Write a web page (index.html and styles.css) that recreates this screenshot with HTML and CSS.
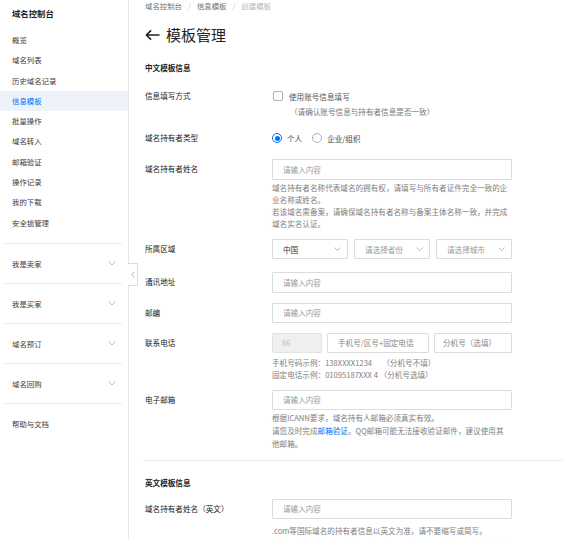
FILE: index.html
```html
<!DOCTYPE html>
<html lang="zh-CN">
<head>
<meta charset="utf-8">
<title>模板管理</title>
<link rel="stylesheet" href="styles.css">
</head>
<body>
<div class="app">
  <aside class="sidebar">
    <div class="sb-title">域名控制台</div>
    <ul class="sb-list">
      <li>概览</li>
      <li>域名列表</li>
      <li>历史域名记录</li>
      <li class="active">信息模板</li>
      <li>批量操作</li>
      <li>域名转入</li>
      <li>邮箱验证</li>
      <li>操作记录</li>
      <li>我的下载</li>
      <li>安全锁管理</li>
    </ul>
    <div class="sb-groups">
      <div class="sb-group"><span>我是卖家</span><svg class="chev" viewBox="0 0 8 5"><path d="M0.5 0.5L4 4L7.5 0.5"/></svg></div>
      <div class="sb-group"><span>我是买家</span><svg class="chev" viewBox="0 0 8 5"><path d="M0.5 0.5L4 4L7.5 0.5"/></svg></div>
      <div class="sb-group"><span>域名预订</span><svg class="chev" viewBox="0 0 8 5"><path d="M0.5 0.5L4 4L7.5 0.5"/></svg></div>
      <div class="sb-group"><span>域名回购</span><svg class="chev" viewBox="0 0 8 5"><path d="M0.5 0.5L4 4L7.5 0.5"/></svg></div>
      <div class="sb-group"><span>帮助与文档</span></div>
    </div>
    <div class="sb-toggle"><svg viewBox="0 0 5 8"><path d="M4 0.5L1 4L4 7.5"/></svg></div>
  </aside>
  <main class="main">
    <div class="breadcrumb"><span>域名控制台</span><i>/</i><span>信息模板</span><i>/</i><span class="cur">创建模板</span></div>
    <h1 class="title"><svg class="back" viewBox="0 0 16 12"><path d="M15.5 6H1.5M6.5 1L1.5 6L6.5 11"/></svg>模板管理</h1>

    <h2 class="sec-title">中文模板信息</h2>
    <div class="form">
      <div class="row r1">
        <div class="label">信息填写方式</div>
        <div class="ctrl">
          <div class="check"><span class="box"></span><span>使用账号信息填写</span></div>
          <div class="check-note">（请确认账号信息与持有者信息是否一致）</div>
        </div>
      </div>
      <div class="row r2">
        <div class="label">域名持有者类型</div>
        <div class="ctrl radios">
          <span class="radio on"></span><span class="rtext">个人</span>
          <span class="radio"></span><span class="rtext">企业/组织</span>
        </div>
      </div>
      <div class="row r3">
        <div class="label">域名持有者姓名</div>
        <div class="ctrl">
          <div class="input">请输入内容</div>
          <p class="help h-name">域名持有者名称代表域名的拥有权，请填写与所有者证件完全一致的企业名称或姓名。<br>若该域名需备案，请确保域名持有者名称与备案主体名称一致，并完成域名实名认证。</p>
        </div>
      </div>
      <div class="row r4">
        <div class="label">所属区域</div>
        <div class="ctrl selects">
          <div class="select val">中国<svg class="schev" viewBox="0 0 8 5"><path d="M0.5 0.5L4 4L7.5 0.5"/></svg></div>
          <div class="select">请选择省份<svg class="schev" viewBox="0 0 8 5"><path d="M0.5 0.5L4 4L7.5 0.5"/></svg></div>
          <div class="select">请选择城市<svg class="schev" viewBox="0 0 8 5"><path d="M0.5 0.5L4 4L7.5 0.5"/></svg></div>
        </div>
      </div>
      <div class="row r5">
        <div class="label">通讯地址</div>
        <div class="ctrl"><div class="input">请输入内容</div></div>
      </div>
      <div class="row r6">
        <div class="label">邮编</div>
        <div class="ctrl"><div class="input">请输入内容</div></div>
      </div>
      <div class="row r7">
        <div class="label">联系电话</div>
        <div class="ctrl">
          <div class="phones">
            <div class="input code">86</div>
            <div class="input num">手机号/区号+固定电话</div>
            <div class="input ext">分机号（选填）</div>
          </div>
          <p class="help h-phone">手机号码示例：138XXXX1234&nbsp;&nbsp;&nbsp;&nbsp;&nbsp;&nbsp;（分机号不填）<br>固定电话示例：01095187XXX 4 （分机号选填）</p>
        </div>
      </div>
      <div class="row r8">
        <div class="label">电子邮箱</div>
        <div class="ctrl">
          <div class="input">请输入内容</div>
          <p class="help h-mail">根据ICANN要求，域名持有人邮箱必须真实有效。<br>请您及时完成<a class="link">邮箱验证</a>。QQ邮箱可能无法接收验证邮件，建议使用其他邮箱。</p>
        </div>
      </div>
    </div>

    <div class="divider"></div>

    <h2 class="sec-title en">英文模板信息</h2>
    <div class="form">
      <div class="row">
        <div class="label">域名持有者姓名（英文）</div>
        <div class="ctrl">
          <div class="input">请输入内容</div>
          <p class="help h-en">.com等国际域名的持有者信息以英文为准，请不要缩写或简写。<br>中文信息将自动翻译为英文信息，如翻译有误，请您手动修改英文信息后再提交。</p>
        </div>
      </div>
    </div>
  </main>
</div>
</body>
</html>
```

FILE: styles.css
```css
* { box-sizing: border-box; }
html, body { margin: 0; padding: 0; background: #fff; }
body {
  font-family: "Noto Sans CJK SC", "Noto Sans", sans-serif;
  font-size: 7.6px;
  color: #333;
  overflow: hidden;
}
.app { display: flex; min-height: 539px; }

/* sidebar */
.sidebar {
  position: relative;
  width: 129px;
  flex: none;
  border-right: 1px solid #e5e5e5;
}
.sb-title {
  height: 26px;
  line-height: 26px;
  padding-left: 12px;
  font-size: 8.4px;
  font-weight: 700;
  color: #222;
}
.sb-list { list-style: none; margin: 4px 0 0; padding: 0; }
.sb-list li {
  height: 20.3px;
  line-height: 20.3px;
  padding-left: 12px;
  color: #3a3a3a;
  font-size: 7.4px;
}
.sb-list li.active { background: #eef2f9; color: #006eff; }
.sb-groups { margin-top: 10px; }
.sb-group {
  display: flex;
  align-items: center;
  justify-content: space-between;
  height: 40px;
  margin: 0 6px 0 4px;
  padding: 0 6px 0 8px;
  border-top: 1px solid #ebebeb;
  color: #3a3a3a;
  font-size: 7.4px;
}
.chev { width: 8px; height: 5px; fill: none; stroke: #a8a8a8; stroke-width: 0.8; }
.sb-toggle {
  position: absolute;
  left: 128px;
  top: 263px;
  width: 10px;
  height: 23px;
  background: #fff;
  border: 1px solid #dcdcdc;
  border-left: none;
  display: flex;
  align-items: center;
  justify-content: center;
}
.sb-toggle svg { width: 4px; height: 7px; fill: none; stroke: #888; stroke-width: 0.8; }

/* main */
.main { flex: 1; padding-left: 16px; }
.breadcrumb {
  height: 12px;
  line-height: 12px;
  color: #6f6f6f;
  font-size: 7.4px;
}
.breadcrumb i { font-style: normal; color: #ccc; margin: 0 6px; }
.breadcrumb .cur { color: #b5b5b5; }
.title {
  margin: 13px 0 0;
  height: 20px;
  line-height: 20px;
  font-size: 15px;
  font-weight: 400;
  color: #222;
  display: flex;
  align-items: center;
}
.back { width: 15px; height: 12px; margin-right: 6px; fill: none; stroke: #222; stroke-width: 1.7; }
.sec-title {
  margin: 17px 0 0;
  height: 12px;
  line-height: 12px;
  font-size: 7.6px;
  font-weight: 700;
  color: #222;
}
.sec-title.en { margin-top: 16px; }

.form { margin-top: 12px; }
.sec-title.en + .form { margin-top: 10px; }
.row { display: flex; margin-bottom: 10px; }
.label {
  width: 127px;
  flex: none;
  height: 20px;
  line-height: 20px;
  color: #222;
}
.ctrl { width: 240px; }

.check { display: flex; align-items: center; height: 20px; }
.box {
  width: 10px; height: 10px;
  border: 1px solid #b0b0b0;
  border-radius: 2px;
  margin: 0 6px 0 1px;
}
.check span:last-child { color: #555; }
.check-note { padding-left: 18px; line-height: 12px; height: 12px; color: #777; }

.r2 { margin-bottom: 11px; }
.radios { display: flex; align-items: center; height: 20px; }
.radio {
  width: 10px; height: 10px;
  border: 1px solid #b0b0b0;
  border-radius: 50%;
  margin-right: 5px;
  position: relative;
}
.radio.on { border-color: #006eff; }
.radio.on::after {
  content: "";
  position: absolute;
  left: 1.5px; top: 1.5px;
  width: 5px; height: 5px;
  border-radius: 50%;
  background: #006eff;
}
.rtext { color: #444; margin-right: 10px; }

.input {
  height: 20px;
  line-height: 18px;
  border: 1px solid #dcdcdc;
  border-radius: 1px;
  padding-left: 10px;
  color: #9a9a9a;
  white-space: nowrap;
  overflow: hidden;
}
.r3 .input, .r5 .input { height: 21px; line-height: 19px; }

.help { margin: 2px 0 0; line-height: 12px; color: #808080; }
.h-name { margin-bottom: -1px; }
.r4 { margin-bottom: 13px; }
.selects { display: flex; gap: 6px; }
.select {
  width: 76px;
  height: 20px;
  border: 1px solid #dcdcdc;
  border-radius: 1px;
  padding: 0 6px 0 10px;
  display: flex;
  align-items: center;
  justify-content: space-between;
  color: #9a9a9a;
}
.select.val { color: #333; }
.schev { width: 7px; height: 4.5px; fill: none; stroke: #999; stroke-width: 0.8; }

.phones { display: flex; gap: 5px; }
.phones .code { width: 50px; background: #efefef; border-color: #e2e2e2; padding-left: 9px; color: #bbb; }
.phones .num { width: 102px; color: #888; }
.phones .ext { flex: 1; padding-left: 8px; color: #888; }
.h-phone { margin-top: 4px; margin-bottom: -1px; }
.h-mail { margin-top: 1px; line-height: 13px; width: 236px; }
.link { color: #006eff; }

.divider {
  width: 420px;
  margin-left: -2px;
  height: 1px;
  background: #ececec;
}
.h-en { margin-top: 6px; }
```
